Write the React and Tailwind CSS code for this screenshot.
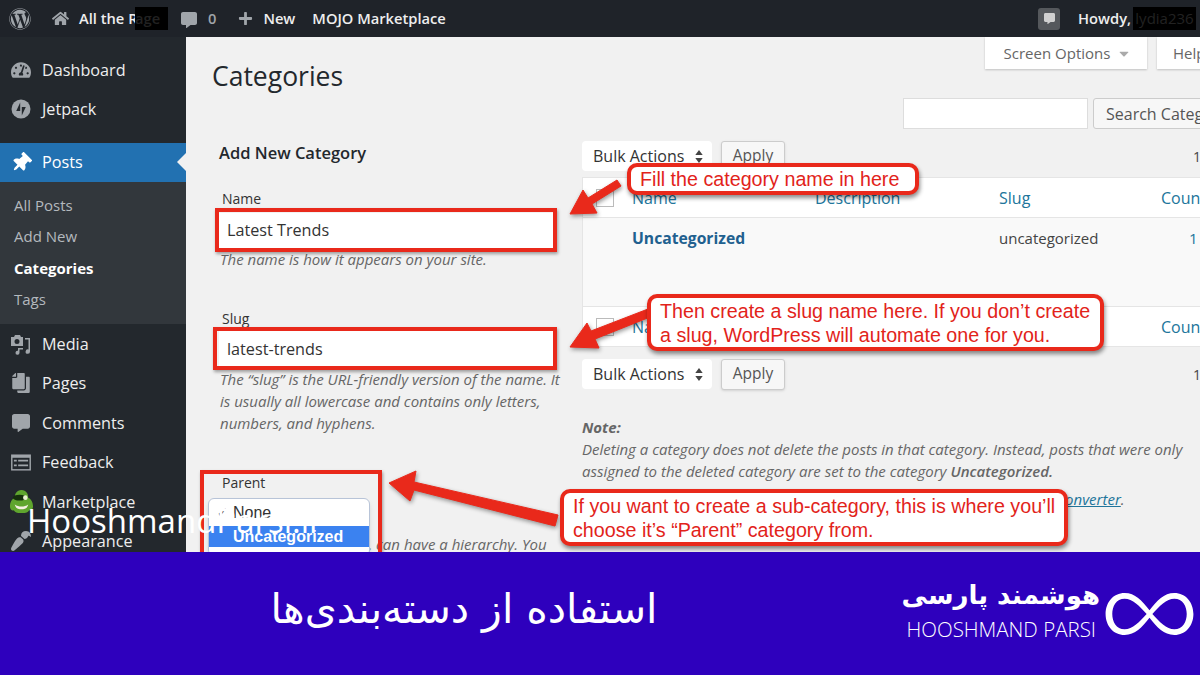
import React from 'react';
import { FaWordpress, FaHome, FaCommentAlt, FaPlus, FaTachometerAlt, FaThumbtack, FaCopy, FaPaintBrush, FaCaretDown } from 'react-icons/fa';

const JetpackIcon = () => (
    <svg viewBox="0 0 20 20" className="h-[20px] w-[20px]">
        <circle cx="10" cy="10" r="9.5" fill="#a0a5aa" />
        <path d="M9.2 3.500v8.500H5.200zM10.800 16.500V8h4z" fill="#23282d" />
    </svg>
);

const MediaIcon = () => (
    <svg viewBox="0 0 22 22" className="h-[22px] w-[22px]" fill="#a0a5aa">
        <path d="M1 4h3l1-2h5l1 2h2v9H1zM7 6a2.500 2.500 0 1 0 0 5 2.500 2.500 0 0 0 0-5z" fillRule="evenodd" />
        <path d="M15 5h5v1.500h-5zM18.500 6h1.500v12.500a2.200 2.200 0 1 1-1.500-2zM8 15h5v1.500H9.500v3.200a2 2 0 1 1-1.500-1.900z" />
    </svg>
);

const FeedbackIcon = () => (
    <svg viewBox="0 0 22 18" className="h-[17px] w-[22px]">
        <rect x="0.500" y="0.500" width="21" height="17" fill="#a0a5aa" />
        <rect x="2" y="4" width="18" height="12" fill="#23282d" />
        <path d="M3.500 6h3v2h-3zM8 6h10.500v2H8zM3.500 11h3v2h-3zM8 11h10.500v2H8z" fill="#a0a5aa" />
    </svg>
);

const Mascot = () => (
    <svg viewBox="0 0 26 26" className="h-[25px] w-[25px]">
        <path d="M13 1c5 0 7 4 7 8 3 1 5 5 5 9 0 3-2 5-4 4-2 3-5 3-8 3s-6 0-8-3c-2 1-4-1-4-4 0-4 2-8 5-9 0-4 2-8 7-8z" fill="#5fa52e" />
        <ellipse cx="11" cy="9" rx="7" ry="3" fill="#16300c" />
        <circle cx="17" cy="9" r="2.400" fill="#e8f0d0" />
        <path d="M6 16c4 3 10 3 14 0-1 4-3 5-7 5s-6-1-7-5z" fill="#f4efe0" />
    </svg>
);

const menuTop = [
    { label: 'Dashboard', icon: <FaTachometerAlt className="h-[20px] w-[20px] text-[#a0a5aa]" /> },
    { label: 'Jetpack', icon: <JetpackIcon /> },
];

const menuBottom = [
    { label: 'Media', icon: <MediaIcon /> },
    { label: 'Pages', icon: <FaCopy className="h-[20px] w-[20px] -scale-x-100 text-[#a0a5aa]" /> },
    { label: 'Comments', icon: <FaCommentAlt className="h-[18px] w-[18px] text-[#a0a5aa]" /> },
    { label: 'Feedback', icon: <FeedbackIcon /> },
    { label: 'Marketplace', icon: <Mascot /> },
    { label: 'Appearance', icon: <FaPaintBrush className="h-[20px] w-[20px] rotate-180 text-[#a0a5aa]" /> },
];

const MenuItem = ({ label, icon }) => (
    <div className="flex h-[39.5px] shrink-0 items-center">
        <span className="flex w-[42px] shrink-0 justify-center pl-[2px] pr-[2px]">{icon}</span>
        <span className="text-[16.2px] font-medium text-[#eeeeee]">{label}</span>
    </div>
);

const Sidebar = () => (
    <aside className="flex w-[186px] shrink-0 flex-col overflow-hidden bg-[#23282d] pt-[13px]">
        {menuTop.map(m => <MenuItem key={m.label} {...m} />)}
        <div className="relative mt-[14px] flex h-[39px] shrink-0 items-center bg-[#2271b1]">
            <span className="flex w-[42px] justify-center"><FaThumbtack className="h-[20px] w-[20px] rotate-45 text-white" /></span>
            <span className="text-[16.2px] font-medium text-white">Posts</span>
            <span className="absolute right-0 top-[10px] h-0 w-0 border-y-[9px] border-r-[9px] border-y-transparent border-r-[#f1f1f1]"></span>
        </div>
        <div className="flex shrink-0 flex-col bg-[#32373c] pb-[9px] pl-[14px] pt-[7px] text-[15px] text-[#b4b9be]">
            <div className="flex h-[31.5px] items-center">All Posts</div>
            <div className="flex h-[31.5px] items-center">Add New</div>
            <div className="flex h-[31.5px] items-center font-bold text-white">Categories</div>
            <div className="flex h-[31.5px] items-center">Tags</div>
        </div>
        {menuBottom.map(m => <MenuItem key={m.label} {...m} />)}
    </aside>
);

const AdminBar = () => (
    <header className="flex h-[37px] shrink-0 items-center whitespace-nowrap bg-[#1f2329] text-[14.7px] font-semibold text-[#eeeeee]">
        <FaWordpress className="ml-[9px] h-[22px] w-[22px] text-[#a0a5aa]" />
        <FaHome className="ml-[21px] h-[17px] w-[17px] text-[#a0a5aa]" />
        <span className="ml-[10px] w-[56px]">All the R</span>
        <span className="w-[33px] bg-black text-[#222222]">age</span>
        <FaCommentAlt className="ml-[13px] mt-[2px] h-[16px] w-[16px] text-[#a0a5aa]" />
        <span className="ml-[11px] text-[#a0a5aa]">0</span>
        <FaPlus className="ml-[22px] h-[15px] w-[15px] text-[#a0a5aa]" />
        <span className="ml-[10px]">New</span>
        <span className="ml-[17px]">MOJO Marketplace</span>
        <span className="ml-auto flex h-[22px] w-[22px] items-center justify-center rounded-[3px] bg-[#55585c]">
            <FaCommentAlt className="h-[11px] w-[11px] text-[#d0d0d0]" />
        </span>
        <span className="ml-[18px]">Howdy,</span>
        <span className="ml-[2px] mr-[4px] flex h-[23px] w-[63px] items-center justify-center bg-black text-[15px] font-normal text-[#222222]">lydia236</span>
    </header>
);

const Help = ({ children }) => (
    <p className="text-[15px] italic leading-[22px] text-[#666666]">{children}</p>
);

const LeftColumn = () => (
    <div className="relative ml-[33px] w-[344px] shrink-0">
        <h3 className="text-[16.5px] font-semibold leading-[24px] text-[#23282d]">Add New Category</h3>
        <label className="mt-[24px] block pl-[3px] text-[14px] leading-[20px] text-[#333333]">Name</label>
        <div className="mt-[4px] flex h-[35px] w-[334px] items-center bg-white pl-[8px] text-[16.2px] text-[#333333]">Latest Trends</div>
        <div className="pl-[1px]">
            <Help>The name is how it appears on your site.</Help>
        </div>
        <label className="mt-[39px] block pl-[3px] text-[14px] leading-[20px] text-[#333333]">Slug</label>
        <div className="mt-[2px] flex h-[35px] w-[334px] items-center bg-white pl-[8px] pt-[2px] text-[16.2px] text-[#333333]">latest-trends</div>
        <div className="mt-[2px] pl-[1px]">
            <Help>The “slug” is the URL-friendly version of the name. It is usually all lowercase and contains only letters, numbers, and hyphens.</Help>
        </div>
        <label className="mt-[39px] block pl-[3px] text-[14px] leading-[20px] text-[#333333]">Parent</label>
        <div className="mt-[40px] whitespace-nowrap pl-[1px]">
            <Help>Categories, unlike tags, can have a hierarchy. You</Help>
        </div>
        <div className="absolute left-[-11px] top-[357px] h-[58px] w-[162px] rounded-[6px] border border-[#b8c4d8] bg-white font-['Liberation_Sans',sans-serif] text-[16px] text-[#333333] shadow-md">
            <div className="flex h-[27px] items-center pt-[1px]"><span className="w-[24px] pl-[8px] text-[13px]">✓</span>None</div>
            <div className="flex h-[21px] items-center bg-[#3b82f0] pl-[24px] font-semibold text-white">Uncategorized</div>
        </div>
    </div>
);

const Select = () => (
    <div className="flex h-[30px] w-[130px] items-center justify-between rounded-[4px] bg-white pl-[11px] pr-[9px] text-[16px] text-[#333333]">
        Bulk Actions
        <svg viewBox="0 0 8 14" className="h-[13px] w-[8px]" fill="#444444"><path d="M4 0l4 5.500H0zM4 14L0 8.500h8z" /></svg>
    </div>
);

const TableActions = () => (
    <div className="flex h-[30px] items-center gap-[9px]">
        <Select />
        <button className="h-[31px] w-[64px] rounded-[3px] border border-[#cccccc] bg-[#f7f7f7] text-[15.5px] text-[#555555] shadow-sm">Apply</button>
        <span className="ml-[399px] whitespace-nowrap text-[14px] text-[#444444]">1 item</span>
    </div>
);

const TableHead = () => (
    <div className="grid h-[39px] grid-cols-[49px_183px_184px_162px_60px] items-center text-[16px] text-[#21759b]">
        <span className="ml-[13px] h-[18px] w-[18px] border border-[#bbbbbb] bg-white"></span>
        <span>Name</span>
        <span>Description</span>
        <span>Slug</span>
        <span>Count</span>
    </div>
);

const RightColumn = () => (
    <div className="ml-[19px] w-[660px] shrink-0">
        <TableActions />
        <div className="mt-[6px] border border-[#e5e5e5] bg-white">
            <TableHead />
            <div className="grid h-[90px] grid-cols-[49px_183px_184px_162px_60px] border-y border-[#e5e5e5] bg-[#f9f9f9] pt-[9px]">
                <span></span>
                <span className="text-[15.7px] font-bold text-[#21608f]">Uncategorized</span>
                <span></span>
                <span className="text-[15px] text-[#444444]">uncategorized</span>
                <span className="pl-[28px] text-[15px] text-[#21759b]">1</span>
            </div>
            <TableHead />
        </div>
        <div className="mt-[12px]"><TableActions /></div>
        <div className="mt-[27px] w-[616px] text-[15px] italic leading-[22px] text-[#666666]">
            <p className="font-bold">Note:</p>
            <p>Deleting a category does not delete the posts in that category. Instead, posts that were only assigned to the deleted category are set to the category <b className="font-semibold">Uncategorized.</b></p>
            <p className="mt-[6px] whitespace-nowrap">Categories can be selectively converted to tags using the <span className="text-[#21759b] underline">category to tag converter</span>.</p>
        </div>
    </div>
);

const Main = () => (
    <main className="min-w-0 flex-1 overflow-hidden bg-[#f1f1f1]">
        <div className="flex gap-[10px] pl-[799px]">
            <div className="flex h-[32px] w-[162px] shrink-0 items-center justify-center gap-[8px] bg-white pl-[2px] text-[15px] text-[#666666] shadow-[0_1px_2px_rgba(0,0,0,0.2)]">
                Screen Options <FaCaretDown className="h-[15px] w-[12px] text-[#aaaaaa]" />
            </div>
            <div className="flex h-[32px] w-[80px] shrink-0 items-center bg-white pl-[16px] text-[15px] text-[#666666] shadow-[0_1px_2px_rgba(0,0,0,0.2)]">Help</div>
        </div>
        <h1 className="ml-[26px] mt-[-11px] text-[26.5px] leading-[36px] text-[#23282d]">Categories</h1>
        <div className="mt-[4px] flex gap-[5px] pl-[717px]">
            <div className="h-[31px] w-[185px] shrink-0 border border-[#dddddd] bg-white"></div>
            <button className="h-[31px] w-[150px] shrink-0 whitespace-nowrap rounded-[3px] border border-[#cccccc] bg-[#f7f7f7] pl-[12px] text-left text-[16px] text-[#555555]">Search Categories</button>
        </div>
        <div className="mt-[12px] flex">
            <LeftColumn />
            <RightColumn />
        </div>
    </main>
);

const Callout = ({ className, children }) => (
    <div className={`absolute flex items-center rounded-[10px] border-[4px] border-[#e9291b] bg-white pl-[9px] font-['Liberation_Sans',sans-serif] text-[19.7px] leading-[24px] text-[#e2231a] shadow-[1px_3px_4px_rgba(0,0,0,0.45)] ${className}`}>
        <div>{children}</div>
    </div>
);

const RedBox = ({ className }) => (
    <div className={`absolute border-[4px] border-[#e9291b] shadow-[1px_2px_3px_rgba(0,0,0,0.35)] ${className}`}></div>
);

const Annotations = () => (
    <div className="pointer-events-none absolute inset-0 overflow-hidden">
        <RedBox className="left-[215px] top-[208px] h-[44px] w-[342px]" />
        <RedBox className="left-[213px] top-[327px] h-[43px] w-[344px]" />
        <RedBox className="left-[200px] top-[470px] h-[100px] w-[182px]" />
        {/* arrows */}
        <svg className="absolute left-0 top-0 h-[552px] w-[1200px] drop-shadow-[1px_2px_2px_rgba(0,0,0,0.4)]" viewBox="0 0 1200 552" fill="#e9291b">
            <path d="M617 180l4 6-29 18 5 9-27 1 13-24 5 8z" stroke="#e9291b" strokeLinejoin="round" />
            <path d="M648 309l2 8-55 22 4 9-29-1 17-24 4 8z" stroke="#e9291b" strokeLinejoin="round" />
            <path d="M558 515l-3 11-141-36-4 11-21-18 27-12-2 11z" stroke="#e9291b" strokeLinejoin="round" />
        </svg>
        <Callout className="left-[627px] top-[163px] h-[32px] w-[292px]">Fill the category name in here</Callout>
        <Callout className="left-[647px] top-[294px] h-[57px] w-[457px]">
            <p>Then create a slug name here. If you don’t create</p>
            <p>a slug, WordPress will automate one for you.</p>
        </Callout>
        <Callout className="left-[560px] top-[489px] h-[57px] w-[508px]">
            <p>If you want to create a sub-category, this is where you’ll</p>
            <p>choose it’s “Parent” category from.</p>
        </Callout>
        <div className="absolute left-[27px] top-[499px] font-['Open_Sans',sans-serif] text-[33px] font-normal leading-[44px] text-white">HooshmandParsi.ir</div>
    </div>
);

const Banner = () => (
    <footer className="flex h-[123px] shrink-0 items-center bg-[#2e00bd] text-white" dir="ltr">
        <h2 dir="rtl" className="mb-[10px] ml-[270px] w-[388px] whitespace-nowrap text-center font-['DejaVu_Sans',sans-serif] text-[41px] leading-[52px]">استفاده از دسته‌بندی‌ها</h2>
        <div className="mb-[9px] ml-[246px] flex w-[192px] flex-col items-end">
            <div dir="rtl" className="mr-[-4px] whitespace-nowrap font-['DejaVu_Sans',sans-serif] text-[26px] font-bold leading-[40px]">هوشمند پارسی</div>
            <div className="whitespace-nowrap font-['Open_Sans',sans-serif] text-[20.5px] font-light leading-[28px]">HOOSHMAND PARSI</div>
        </div>
        <svg viewBox="0 0 92 44" className="ml-[8px] h-[42px] w-[91px]" fill="white" fillRule="evenodd">
            <path d="M46 18C38 8 31 0 20 0 8 0 0 10 0 22s8 22 20 22c11 0 18-8 26-18 8 10 15 18 26 18 12 0 20-10 20-22S84 0 72 0C61 0 54 8 46 18zM20 6C11 6 7 14 7 22s4 16 13 16c8 0 16-8 23-16C36 14 28 6 20 6zM72 6c9 0 13 8 13 16s-4 16-13 16c-8 0-16-8-23-16C56 14 64 6 72 6z" />
        </svg>
    </footer>
);

const App = () => (
    <div className="flex h-[675px] w-[1200px] flex-col overflow-hidden font-['Open_Sans',sans-serif]">
        <div className="relative flex h-[552px] shrink-0 flex-col overflow-hidden">
            <AdminBar />
            <div className="flex min-h-0 flex-1">
                <Sidebar />
                <Main />
            </div>
            <Annotations />
        </div>
        <Banner />
    </div>
);

export default App;
